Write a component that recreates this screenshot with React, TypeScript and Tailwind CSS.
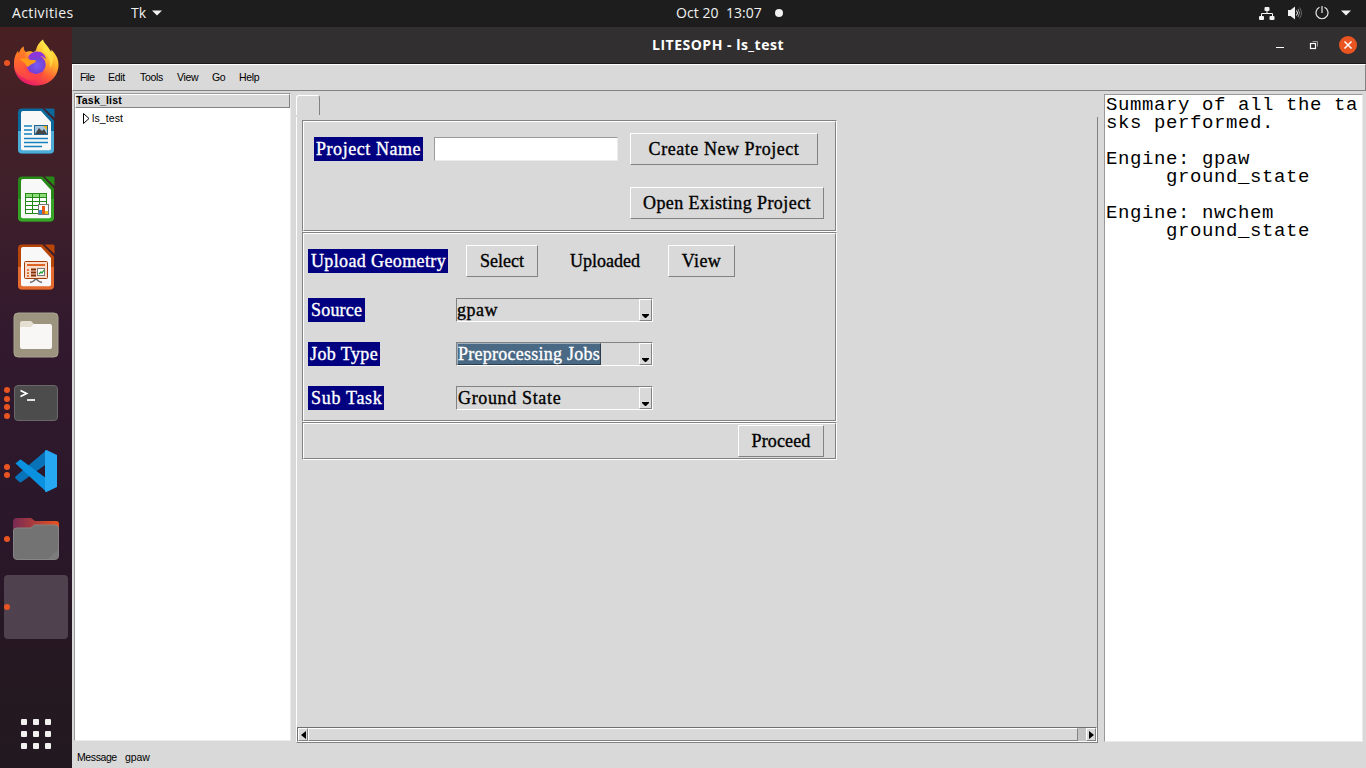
import React from "react";

const serif = "font-['Liberation_Serif',serif] text-[18px] whitespace-pre [-webkit-text-stroke:0.35px_currentColor]";
const sans = "font-['Liberation_Sans',sans-serif] text-[10.5px] whitespace-pre";

function Dots({ n }: { n: number }) {
  return (
    <div className="flex w-[10px] shrink-0 flex-col items-end gap-[2.67px]">
      {Array.from({ length: n }, (_, i) => (
        <span key={i} className="size-[6px] rounded-full bg-[#e95420]" />
      ))}
    </div>
  );
}

function DockItem({ dots, children }: { dots: number; children?: React.ReactNode }) {
  return (
    <div className="flex h-[68px] w-[72px] shrink-0 items-center">
      <Dots n={dots} />
      <div className="ml-[2px] flex w-[48px] justify-center">{children}</div>
    </div>
  );
}

function Firefox() {
  return (
    <svg width="48" height="48" viewBox="0 0 48 48">
      <defs>
        <linearGradient id="ffa" x1="0.8" y1="0.05" x2="0.25" y2="1">
          <stop offset="0" stopColor="#fff44f" />
          <stop offset="0.35" stopColor="#ffb02b" />
          <stop offset="0.62" stopColor="#ff5b35" />
          <stop offset="1" stopColor="#e5126f" />
        </linearGradient>
        <radialGradient id="ffb" cx="0.55" cy="0.55" r="0.6">
          <stop offset="0" stopColor="#7a5cf5" />
          <stop offset="0.6" stopColor="#7245d6" />
          <stop offset="1" stopColor="#a629d8" />
        </radialGradient>
        <linearGradient id="ffc" x1="0" y1="0" x2="0.6" y2="1">
          <stop offset="0" stopColor="#ff8a16" />
          <stop offset="1" stopColor="#ff3f4c" />
        </linearGradient>
      </defs>
      <path d="M31 .5c.500 3 3 4.500 5 7.500 1.500 2 2.200 3.500 3 5 .500-.500.500-1.500.3-2.500 3.500 4 7.300 8 7.200 15.500C46.300 38 37 46.500 24 46.500 11 46.500 1.500 37 2 25c.1-6 1.500-9.500 4-13l.8 3C8 11 9.500 9 11.500 7.500c0 2 .5 4 2 5.500 3-1 4-.8 6.500-.5C21 14 23.500 12 24 11c1-4.500 3.500-8 7-10.500z" fill="url(#ffa)" />
      <path d="M2 25c.1-6 1.500-9.500 4-13l.8 3C8 11 9.500 9 11.500 7.500c0 2 .5 4 2 5.500l-1.500 13.500C13 38 27 38 32 32c-3 9-14 12-20 7C5 36 2 31 2 25z" fill="url(#ffc)" opacity=".75" />
      <circle cx="24" cy="25.500" r="9.700" fill="url(#ffb)" />
      <path d="M16 19c1-4 5-6.500 9-6.500 5 0 8.500 3.500 9 8-3-4-7-4-9-3-3-.2-6 0-9 1.500z" fill="#8b36dc" />
      <path d="M7.500 20.500c4-2 8.500-1.500 11 .5 2 .2 4-.2 5.500.5 0 2.500-3.500 3-5 4-1.500 1-2 2-4 2.500-1-3-4-6-7.500-7.500z" fill="#ff9b18" />
      <path d="M31 13c5 3 8 8 7 16 3-4 4-10 2-15-2-4-7-7-9-11 1 4-1 6 0 10z" fill="#ffe948" opacity=".6" />
    </svg>
  );
}

function Page({ a, b, kind }: { a: string; b: string; kind: "writer" | "calc" | "impress" }) {
  return (
    <svg width="40" height="48" viewBox="0 0 40 48">
      <path d="M6 1.500h20.500L38 13.500V42.500a4 4 0 0 1-4 4H6a4 4 0 0 1-4-4V5.500a4 4 0 0 1 4-4z" fill={a} />
      <path d="M2 24h36v18.500a4 4 0 0 1-4 4H6a4 4 0 0 1-4-4z" fill={b} />
      <path d="M7 4h18l10 11v26.500a1.800 1.800 0 0 1-1.800 1.800H6.800A1.800 1.800 0 0 1 5 41.500V6a2 2 0 0 1 2-2z" fill="#f8f8f8" />
      <path d="M28.500 1.500H37a1.500 1.500 0 0 1 1.500 1.500v8z" fill={a} />
      {kind === "writer" && (
        <>
          <path d="M8 19h8M8 23h8M8 27h8M8 31.500h24M8 35.500h24M8 39.500h18" stroke="#1583bd" strokeWidth="1.700" />
          <rect x="18.500" y="18.500" width="13" height="9" fill="#a7c8df" stroke="#24678f" />
          <path d="M19 27l4-6 3 3 2-2 3 5z" fill="#454545" />
          <path d="M27 19h4v4z" fill="#f4b51c" />
        </>
      )}
      {kind === "calc" && (
        <>
          <rect x="9.500" y="18.500" width="21" height="20" fill="#fff" stroke="#228919" />
          <rect x="10" y="19" width="20" height="3" fill="#8edc78" />
          <path d="M9.500 22.500h21M9.500 26.500h21M9.500 30.500h21M9.500 34.500h21M16.500 18v20M23.500 18v20" stroke="#228919" />
          <rect x="22.500" y="29.500" width="10" height="10" fill="#fff" stroke="#777" />
          <path d="M23 35h3v4h-3z" fill="#3988d0" /><path d="M26 31h3v8h-3z" fill="#e65b16" /><path d="M29 36h3v3h-3z" fill="#f5bd1b" />
        </>
      )}
      {kind === "impress" && (
        <>
          <rect x="8.500" y="18.500" width="23" height="17" rx="1" fill="#fbdcc8" stroke="#a63d09" />
          <path d="M11 22h18" stroke="#dd6425" strokeWidth="2" />
          <path d="M11 27h2M11 30h2M11 33h2" stroke="#e57b43" strokeWidth="2" />
          <path d="M15 26.500h5M15 29.500h5M15 32.500h5" stroke="#842b05" strokeWidth="2" />
          <rect x="21.500" y="25.500" width="7" height="7" fill="#fff" stroke="#777" />
          <path d="M23 31l2-2 1 1 2-3" fill="none" stroke="#27a52e" strokeWidth="1.300" />
          <path d="M14 39.500q4-1 5-3h2q1 2 5 3" fill="none" stroke="#6c6c6c" strokeWidth="1.500" />
        </>
      )}
    </svg>
  );
}

function Dock() {
  return (
    <div className="flex w-[72px] shrink-0 flex-col bg-[linear-gradient(180deg,#482022_0%,#40202a_20%,#32192e_42%,#2a172a_68%,#251821_88%,#221920_100%)] pt-[2px]">
      <DockItem dots={1}><Firefox /></DockItem>
      <DockItem dots={0}><Page a="#0b699c" b="#4eacd8" kind="writer" /></DockItem>
      <DockItem dots={0}><Page a="#278817" b="#35a526" kind="calc" /></DockItem>
      <DockItem dots={0}><Page a="#b84508" b="#e46a2d" kind="impress" /></DockItem>
      <DockItem dots={0}>
        <svg width="46" height="46" viewBox="0 0 46 46">
          <rect x="1" y="1" width="44" height="44" rx="4" fill="#9c947f" stroke="#aaa390" />
          <path d="M7 11a2 2 0 0 1 2-2h9l3 3h10v9H7z" fill="#e5dfd1" />
          <path d="M7 15h11l3-3h16a2 2 0 0 1 2 2v21a2 2 0 0 1-2 2H9a2 2 0 0 1-2-2z" fill="#f8f7f5" />
        </svg>
      </DockItem>
      <DockItem dots={4}>
        <svg width="46" height="38" viewBox="0 0 46 38">
          <rect x="1.500" y="1.500" width="43" height="35" rx="3.500" fill="#4c4c4c" stroke="#696969" />
          <path d="M7.500 6.500l6 3-6 3" fill="none" stroke="#fff" strokeWidth="1.800" />
          <path d="M14 16h8" stroke="#fff" strokeWidth="1.700" />
        </svg>
      </DockItem>
      <DockItem dots={2}>
        <svg width="44" height="44" viewBox="0 0 44 44">
          <path d="M32.500 1v14L7.500 33a1.500 1.500 0 0 1-2 0l-4-3.500a1.500 1.500 0 0 1 0-2z" fill="#0873b8" />
          <path d="M1.500 14.500l4-3.500a1.500 1.500 0 0 1 2 0l25 18.500V43z" fill="#0a91df" />
          <path d="M32.500 1L43 6v32l-10.500 5-1.500-.500V1.500z" fill="#27a8f2" />
        </svg>
      </DockItem>
      <DockItem dots={1}>
        <svg width="46" height="44" viewBox="0 0 46 44">
          <defs><linearGradient id="fold"><stop stopColor="#772953" /><stop offset="1" stopColor="#e95420" /></linearGradient></defs>
          <path d="M0 5a4 4 0 0 1 4-4h14l4 3h21a3 3 0 0 1 3 3v10H0z" fill="url(#fold)" />
          <path d="M.5 14a3 3 0 0 1 3-3H18l3.500-3H42a3.500 3.500 0 0 1 3.500 3.500V39a3.500 3.500 0 0 1-3.500 3.500H4A3.500 3.500 0 0 1 .5 39z" fill="#737373" stroke="#858585" />
          <path d="M35 42L45 33v6a3 3 0 0 1-3 3z" fill="#7c7c7c" />
        </svg>
      </DockItem>
      <div className="mt-[2px] ml-1 flex size-16 items-center rounded-[4px] bg-[#4f424e]">
        <span className="size-[6px] rounded-full bg-[#e95420]" />
      </div>
      <div className="mt-[80px] ml-[21px] grid w-[30px] grid-cols-3 gap-[6px]">
        {Array.from({ length: 9 }, (_, i) => <span key={i} className="size-[6px] rounded-[1px] bg-[#f2f1f0]" />)}
      </div>
    </div>
  );
}

function Groove({ className, children }: { className: string; children: React.ReactNode }) {
  return (
    <div className="w-[535px] border border-t-[#828282] border-r-white border-b-white border-l-[#828282]">
      <div className={`border border-t-white border-r-[#828282] border-b-[#828282] border-l-white ${className}`}>{children}</div>
    </div>
  );
}

function Button({ className, text }: { className: string; text: string }) {
  return (
    <button className={`${serif} flex h-[32px] shrink-0 items-center justify-center border border-t-white border-r-[#828282] border-b-[#828282] border-l-white leading-[24px] text-black ${className}`}>{text}</button>
  );
}

function Label({ className, text }: { className: string; text: string }) {
  return <div className={`${serif} h-[24px] shrink-0 bg-[#000080] leading-[24px] text-white ${className}`}>{text}</div>;
}

function Combo({ text, className, selected }: { text: string; className: string; selected?: boolean }) {
  return (
    <div className="flex h-[24px] w-[197px] border border-t-[#828282] border-r-white border-b-white border-l-[#828282]">
      <div className="flex min-w-0 flex-1">
        <span className={`${serif} h-[22px] ${selected ? "border border-t-[#9fb0bf] border-l-[#9fb0bf] border-r-[#2c3e4e] border-b-[#2c3e4e] bg-[#4a6984] leading-[20px] text-white" : "leading-[22px] text-black"} ${className}`}>{text}</span>
      </div>
      <div className="flex w-[13px] items-end border border-t-white border-r-[#828282] border-b-[#828282] border-l-white pb-[2px] pl-[2px]">
        <svg width="8" height="4" viewBox="0 0 8 4"><path d="M0 0h7v1L4 4H3L0 1z" fill="#000" /></svg>
      </div>
    </div>
  );
}

export default function App() {
  return (
    <div className="flex h-[768px] w-[1366px] flex-col overflow-hidden bg-[#d9d9d9] text-black">
      <div className="flex h-[27px] shrink-0 items-center bg-[#1d1d1d] pb-px font-['Open_Sans',sans-serif] text-[14px] leading-[26px] whitespace-pre text-[#f2f2f2]">
        <span className="ml-[12px] w-[119px] tracking-[0.38px]">Activities</span>
        <span className="w-[21px]">Tk</span>
        <svg width="10" height="6" viewBox="0 0 10 6"><path d="M0 .5h10l-5 5z" fill="#f2f2f2" /></svg>
        <span className="ml-[514px] w-[99px] tracking-[0.05px]">Oct 20  13:07</span>
        <span className="size-[8px] rounded-full bg-[#f2f2f2]" />
        <svg className="ml-[476px]" width="16" height="15" viewBox="0 0 16 15">
          <path d="M8 4v4M2.500 11V7.500h11V11" fill="none" stroke="#f2f2f2" />
          <rect x="5.500" y="1" width="5" height="4" rx="1" fill="#f2f2f2" /><rect x="0" y="10" width="5" height="4" rx="1" fill="#f2f2f2" /><rect x="10.500" y="10" width="5" height="4" rx="1" fill="#f2f2f2" />
        </svg>
        <svg className="ml-[12px]" width="16" height="14" viewBox="0 0 16 14">
          <path d="M1 4h2.500L8 .5v13L3.500 10H1z" fill="#f2f2f2" />
          <path d="M9.500 4.500q2 2.500 0 5" fill="none" stroke="#f2f2f2" /><path d="M11 3q3 4 0 8" fill="none" stroke="#999" /><path d="M12.500 1.500q4 5.500 0 11" fill="none" stroke="#666" />
        </svg>
        <svg className="ml-[12px]" width="14" height="14" viewBox="0 0 14 14"><path d="M4.500 1.300a6 6 0 1 0 5 0M7 0v7" fill="none" stroke="#e8e8e8" strokeWidth="1.200" /></svg>
        <svg className="ml-[12px]" width="10" height="6" viewBox="0 0 10 6"><path d="M0 .5h10l-5 5z" fill="#f2f2f2" /></svg>
      </div>
      <div className="flex min-h-0 flex-1">
        <Dock />
        <div className="flex min-w-0 flex-1 flex-col">
          <div className="flex h-[37px] shrink-0 items-center border-b border-[#1b1a1a] bg-[#322f30] text-white">
            <span className="ml-[580px] w-[623px] font-['Open_Sans',sans-serif] text-[14px] leading-[36px] font-bold tracking-[0.5px]">LITESOPH - ls_test</span>
            <svg width="82" height="20" viewBox="0 0 82 20">
              <path d="M1 12.500h8" stroke="#fff" />
              <path d="M37.500 6.500h5v5" fill="none" stroke="#9b9b9b" /><rect x="35.500" y="8.500" width="5" height="5" fill="none" stroke="#fff" strokeWidth="1.200" />
              <circle cx="73" cy="10" r="9" fill="#e95420" /><path d="M69.500 6.500l7 7m0-7l-7 7" stroke="#fff" strokeWidth="1.500" />
            </svg>
          </div>
          <div className={`${sans} flex h-[27px] shrink-0 items-center border border-t-white border-r-[#828282] border-b-[#828282] border-l-white pb-[2px] leading-[14px] tracking-[-0.3px]`}>
            <span className="ml-[7px] w-[28px] tracking-[-0.6px]">File</span>
            <span className="w-[32px]">Edit</span>
            <span className="w-[37px]">Tools</span>
            <span className="w-[35px]">View</span>
            <span className="w-[27px]">Go</span>
            <span>Help</span>
          </div>
          <div className="flex h-[652px] shrink-0">
            <div className="mt-[2px] ml-[2px] h-[648px] w-[217px] border border-t-[#999] border-r-[#ebebeb] border-b-[#ebebeb] border-l-[#999] bg-white">
              <div className={`${sans} h-[14px] border border-t-white border-r-[#828282] border-b-[#828282] border-l-white bg-[#d9d9d9] leading-[11px] font-bold tracking-[0.2px]`}>Task_list</div>
              <div className={`${sans} flex h-[20px] items-center leading-[14px] tracking-[0.1px]`}>
                <svg className="ml-[8px]" width="7" height="11" viewBox="0 0 7 11"><path d="M.5.5v10l5.500-5z" fill="#fff" stroke="#000" /></svg>
                <span className="ml-[2px]">ls_test</span>
              </div>
            </div>
            <div className="ml-[5px] flex w-[802px] flex-col pt-[4px]">
              <div className="mb-[2px] h-[20px] w-[24px] rounded-t-[3px] border border-b-0 border-t-white border-r-[#828282] border-l-white" />
              <div className="flex h-[626px] flex-col border border-t-0 border-r-[#828282] border-b-[#828282] border-l-white pl-[5px]">
                <div className="h-[610px] pt-[3px]">
                  <Groove className="h-[110px] pt-[11px]">
                    <div className="flex h-[32px] items-center">
                      <Label className="ml-[10px] w-[109px] pl-[2px] tracking-[0.55px]" text="Project Name" />
                      <div className="ml-[11px] h-[24px] w-[184px] border border-t-[#999] border-r-[#ebebeb] border-b-[#ebebeb] border-l-[#999] bg-white" />
                      <Button className="ml-[12px] w-[188px] tracking-[0.55px]" text="Create New Project" />
                    </div>
                    <div className="mt-[22px] flex pl-[326px]">
                      <Button className="w-[194px] tracking-[0.43px]" text="Open Existing Project" />
                    </div>
                  </Groove>
                  <Groove className="h-[188px] pt-[11px]">
                    <div className="flex h-[32px] items-center pl-[4px]">
                      <Label className="w-[140px] pl-[3px] tracking-[0.37px]" text="Upload Geometry" />
                      <Button className="ml-[18px] w-[72px]" text="Select" />
                      <span className={`${serif} ml-[32px] w-[98px] leading-[24px]`}>Uploaded</span>
                      <Button className="w-[67px] tracking-[0.4px]" text="View" />
                    </div>
                    <div className="mt-[21px] flex pl-[4px]">
                      <div className="w-[148px]"><Label className="w-[57px] pl-[3px] tracking-[0.2px]" text="Source" /></div>
                      <Combo text="gpaw" className="tracking-[0.5px]" />
                    </div>
                    <div className="mt-[20px] flex pl-[4px]">
                      <div className="w-[148px]"><Label className="w-[72px] pl-[2px] tracking-[0.4px]" text="Job Type" /></div>
                      <Combo text="Preprocessing Jobs" className="tracking-[0.25px]" selected />
                    </div>
                    <div className="mt-[20px] flex pl-[4px]">
                      <div className="w-[148px]"><Label className="w-[76px] pl-[3px] tracking-[0.7px]" text="Sub Task" /></div>
                      <Combo text="Ground State" className="pl-px tracking-[0.65px]" />
                    </div>
                  </Groove>
                  <Groove className="flex h-[36px] pt-px">
                    <Button className="ml-[434px] w-[86px] tracking-[0.15px]" text="Proceed" />
                  </Groove>
                </div>
                <div className="-ml-[5px] flex h-[15px] w-[800px] border border-t-[#707070] border-r-white border-b-white border-l-[#707070] bg-[#c3c3c3]">
                  <div className="flex w-[10px] items-center justify-center border border-t-white border-r-[#828282] border-b-[#828282] border-l-white bg-[#d9d9d9]">
                    <svg width="5" height="8" viewBox="0 0 5 8"><path d="M5 0v8L0 4z" /></svg>
                  </div>
                  <div className="w-[770px] border border-t-white border-r-[#828282] border-b-[#828282] border-l-white bg-[#d9d9d9]" />
                  <div className="ml-auto flex w-[10px] items-center justify-center border border-t-white border-r-[#828282] border-b-[#828282] border-l-white bg-[#d9d9d9]">
                    <svg width="5" height="8" viewBox="0 0 5 8"><path d="M0 0v8l5-4z" /></svg>
                  </div>
                </div>
              </div>
            </div>
            <div className="mt-[3px] ml-[6px] h-[648px] w-[259px] border border-t-[#999] border-r-[#ebebeb] border-b-[#ebebeb] border-l-[#999] bg-white pt-px pl-px font-['Liberation_Mono',monospace] text-[19px] leading-[18px] tracking-[0.598px] whitespace-pre">
              {"Summary of all the ta\nsks performed.\n\nEngine: gpaw\n     ground_state\n\nEngine: nwchem\n     ground_state"}
            </div>
          </div>
          <div className={`${sans} flex pt-[7px] pl-[5px] leading-[14px] tracking-[-0.4px]`}>
            <span className="w-[48px]">Message</span>
            <span className="tracking-[-0.1px]">gpaw</span>
          </div>
        </div>
      </div>
    </div>
  );
}
